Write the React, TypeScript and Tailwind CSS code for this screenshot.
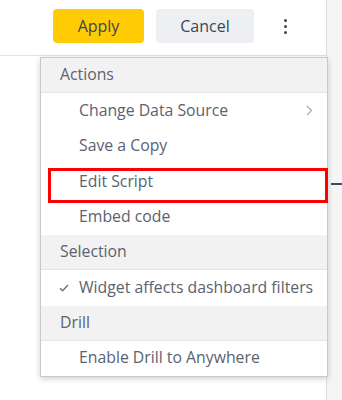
const font = { fontFamily: '"Open Sans", "Noto Sans", sans-serif' };

function Header({ label }: { label: string }) {
  return (
    <div className="h-[35px] flex items-center pl-[19px] bg-[#f2f2f2] border-b border-[#e4e4e4] text-[#5b6270]">
      {label}
    </div>
  );
}

function Item({ label, chevron, checked, boxed }: { label: string; chevron?: boolean; checked?: boolean; boxed?: boolean }) {
  return (
    <div className="h-[35.5px] flex items-center relative pl-[38px] pr-[12px] text-[#5b6270] whitespace-nowrap">
      {checked && (
        <svg width="10" height="8" viewBox="0 0 10 8" className="absolute left-[18px] top-[14px] text-[#6b7280]">
          <path d="M1 4.2l2.6 2.6L9 1" fill="none" stroke="currentColor" strokeWidth="1.4" />
        </svg>
      )}
      <span className="flex-1">{label}</span>
      {chevron && (
        <svg width="7" height="11" viewBox="0 0 7 11" className="text-[#a6abb3] mr-[2px]">
          <path d="M1 1l4.5 4.5L1 10" fill="none" stroke="currentColor" strokeWidth="1.2" />
        </svg>
      )}
      {boxed && <div className="absolute left-[7px] right-[-1px] top-[4px] bottom-[-3px] border-[3px] border-[#ff0000]" />}
    </div>
  );
}

export default function App() {
  return (
    <div className="w-[342px] h-[400px] relative flex bg-white overflow-hidden" style={font}>
      <div className="w-[327px] border-r border-[#dcdcdc] flex flex-col">
        <div className="h-[56px] border-b border-[#e2e2e2] flex items-start justify-end pt-[9px] pr-[39px] gap-[12px]">
          <button className="w-[91px] h-[34px] rounded-[4px] bg-[#ffcb05] text-[#3d4553] text-[16px]">Apply</button>
          <button className="w-[98px] h-[34px] rounded-[4px] bg-[#eeeff2] text-[#3d4553] text-[16px]">Cancel</button>
          <div className="h-[34px] ml-[18px] flex flex-col items-center justify-center gap-[3px]">
            <span className="w-[3px] h-[3px] rounded-full bg-[#3d4553]" />
            <span className="w-[3px] h-[3px] rounded-full bg-[#3d4553]" />
            <span className="w-[3px] h-[3px] rounded-full bg-[#3d4553]" />
          </div>
        </div>
      </div>
      <div className="flex-1 bg-[#f5f5f5] relative">
        <div className="absolute left-[4px] right-0 top-[183px] h-[2px] bg-[#3f4a5c]" />
      </div>

      {/* dropdown menu */}
      <div className="absolute left-[40px] top-[57px] w-[288px] bg-white border border-[#c8c8c8] shadow-[0_2px_6px_rgba(0,0,0,0.18)] text-[15.8px] leading-none">
        <Header label="Actions" />
        <Item label="Change Data Source" chevron />
        <Item label="Save a Copy" />
        <Item label="Edit Script" boxed />
        <Item label="Embed code" />
        <Header label="Selection" />
        <Item label="Widget affects dashboard filters" checked />
        <Header label="Drill" />
        <Item label="Enable Drill to Anywhere" />
      </div>
    </div>
  );
}
